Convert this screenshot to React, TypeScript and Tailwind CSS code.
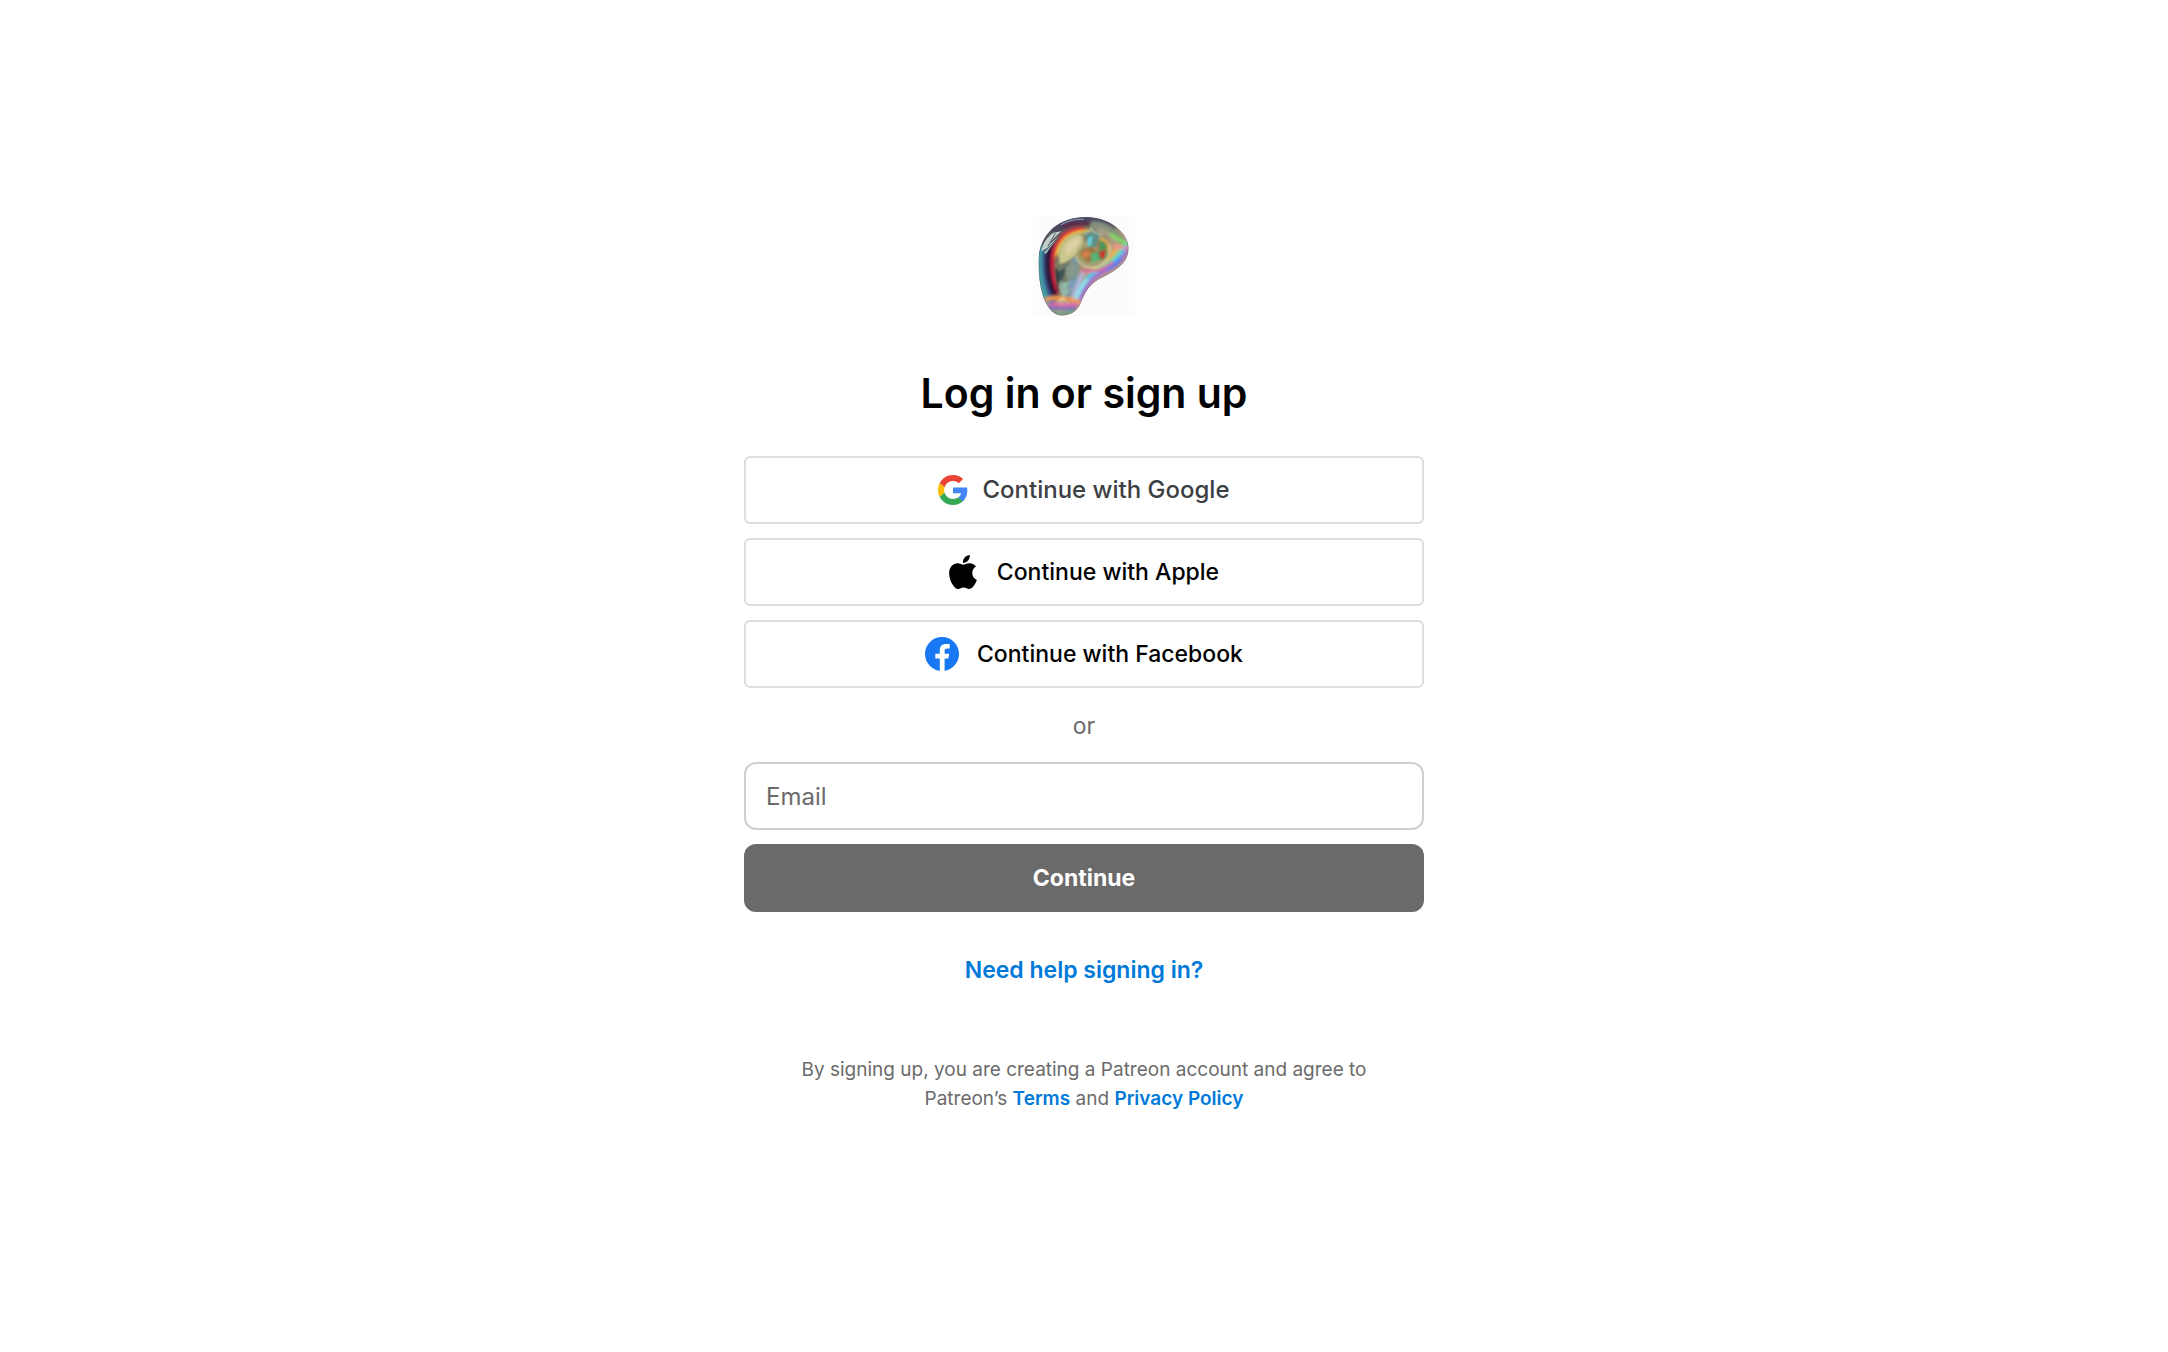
import { useState } from 'react'
import type { ReactNode } from 'react'

interface SocialButtonProps {
  icon: ReactNode
  label: string
  className?: string
}

const BLOB =
  'M187 39C252 39 314 84 314 133C314 176 276 200 240 218C196 238 184 262 170 298C160 324 136 335 114 335C86 335 66 306 56 274C46 240 43 204 44 165C47 88 104 39 187 39Z'

function PatreonLogo() {
  return (
    <svg viewBox="27 33 306 306" className="h-[102px] w-[102px]" role="img" aria-label="Patreon">
      <defs>
        <clipPath id="blob">
          <path d={BLOB} />
        </clipPath>
        <linearGradient id="base" x1="0" y1="0" x2="1" y2="1">
          <stop offset="0" stopColor="#3f3a5c" />
          <stop offset="0.35" stopColor="#7d7a5c" />
          <stop offset="0.6" stopColor="#c9a07c" />
          <stop offset="1" stopColor="#8a6fa8" />
        </linearGradient>
        <filter id="soft3" x="-30%" y="-30%" width="160%" height="160%">
          <feGaussianBlur stdDeviation="2.5" />
        </filter>
        <filter id="soft6" x="-30%" y="-30%" width="160%" height="160%">
          <feGaussianBlur stdDeviation="4" />
        </filter>
      </defs>
      <rect x="27" y="36" width="306" height="300" fill="#fcfcfc" />
      <g clipPath="url(#blob)" fill="none" strokeLinecap="round" strokeLinejoin="round">
        <path d={BLOB} fill="url(#base)" />
        <g filter="url(#soft6)">
          {/* outer rim */}
          <path d="M96 78C140 42 220 40 264 68" stroke="#4b4660" strokeWidth="26" />
          <path d="M120 68C150 56 176 56 204 62" stroke="#5b2547" strokeWidth="12" />
          <path d="M210 64C240 66 270 84 290 108" stroke="#84907c" strokeWidth="24" />
          <path d="M226 78C252 84 268 100 276 118" stroke="#a8a08a" strokeWidth="12" />
          <path d="M50 130C42 200 52 262 80 306" stroke="#3fa0a6" strokeWidth="16" />
          <path d="M62 140C56 200 64 248 84 290" stroke="#3b5590" strokeWidth="12" />
          <path d="M80 112C64 180 72 234 96 280" stroke="#2b1238" strokeWidth="19" />
          {/* warm band running down the left side */}
          <path d="M176 74C118 74 90 116 86 166C84 204 90 234 102 262" stroke="#e0133a" strokeWidth="9" />
          <path d="M190 78C132 76 100 112 94 160" stroke="#ff8a1c" strokeWidth="5" />
          <path d="M196 84C140 82 110 110 101 150" stroke="#f4dc5a" strokeWidth="7" />
          <path d="M130 140C112 190 112 230 124 280" stroke="#6f7a68" strokeWidth="32" />
          <path d="M152 170C156 210 146 250 130 270" stroke="#7294a0" strokeWidth="22" />
          {/* lower right rainbow edge */}
          <path d="M312 98C318 140 292 172 250 196C200 220 186 244 168 286" stroke="#a070cc" strokeWidth="15" />
          <path d="M306 122C290 160 252 180 222 198C194 214 176 236 164 266" stroke="#48c8e8" strokeWidth="12" />
          <path d="M294 124C280 162 244 180 212 194" stroke="#8fd880" strokeWidth="8" />
          <path d="M280 124C268 156 238 174 208 188" stroke="#f2ac4c" strokeWidth="10" />
          <path d="M264 176C236 200 206 204 176 200" stroke="#e6609c" strokeWidth="8" />
          <path d="M288 166C276 184 262 190 252 194" stroke="#4d7bf0" strokeWidth="10" />
          <path d="M262 92C284 104 294 114 312 118" stroke="#7fe05c" strokeWidth="10" />
          <path d="M276 130L312 132" stroke="#f4809c" strokeWidth="8" />
          <path d="M176 210C160 236 154 258 148 280" stroke="#b0b4d8" strokeWidth="14" />
          <path d="M188 228C172 246 166 260 158 280" stroke="#8ce4f0" strokeWidth="12" />
          {/* foot */}
          <path d="M68 286C96 276 126 284 164 292" stroke="#f29a4a" strokeWidth="12" />
          <path d="M74 302C98 298 130 304 158 302" stroke="#dc60b8" strokeWidth="9" />
          <path d="M78 312C98 312 130 316 152 312" stroke="#6a5fd0" strokeWidth="7" />
          <path d="M86 324C104 330 128 330 146 320" stroke="#5c9f86" strokeWidth="9" />
        </g>
        <g filter="url(#soft3)">
          {/* pale highlight */}
          <path d="M106 166C98 132 124 98 158 90C180 88 184 106 172 128C158 152 138 176 106 180Z" fill="#c9c68e" />
          <path d="M124 134C136 108 154 98 168 102C164 124 148 144 126 152Z" fill="#ddd0a4" />
          <path d="M156 150C172 110 214 84 244 100C266 118 260 164 232 184C208 196 170 188 156 150Z" fill="#a3a070" />
          <path d="M180 84L226 84L222 128L196 130Z" fill="#5f8c84" />
          <path d="M192 100L206 96L202 124L190 128Z" fill="#5fd0d8" />
          <path d="M166 150C176 128 196 124 214 134L220 158L190 178Z" fill="#9c7845" />
          <path d="M172 150L190 138L200 152L182 164Z" fill="#d88048" />
          <path d="M200 150L222 142L228 166L204 178Z" fill="#56b474" />
          <path d="M224 108C242 106 256 122 254 146C250 162 238 172 226 168C216 146 216 124 224 108Z" fill="#4c965c" />
          <path d="M230 106C248 110 256 124 252 146" stroke="#f0a43e" strokeWidth="5" />
          <path d="M226 144L246 136L240 166L228 160Z" fill="#cc3028" />
          <path d="M224 116L220 142" stroke="#d8643a" strokeWidth="4" />
          <path d="M258 122C262 150 244 182 214 190C186 194 164 182 154 156" stroke="#d8d4b2" strokeOpacity="0.8" strokeWidth="5" />
          <path d="M180 92L196 80L202 72L208 84L236 92" stroke="#d4dccd" strokeOpacity="0.7" strokeWidth="4" />
          <path d="M98 204L124 192L116 226L98 234Z" fill="#3b5252" />
          <path d="M126 192L146 172L162 196L150 218L128 224Z" fill="#86988a" />
          <path d="M108 236L136 232L130 268L116 276Z" fill="#8fb7a6" />
          <path d="M136 228L154 236L140 256Z" fill="#7f9fc9" />
          <path d="M104 240L118 280L142 254" stroke="#d8e2cf" strokeOpacity="0.7" strokeWidth="3" />
          <path d="M97 196L103 260" stroke="#1c1c2a" strokeWidth="5" />
          <path d="M118 282L112 302M118 284L130 298M114 284L100 294" stroke="#fff1b0" strokeOpacity="0.7" strokeWidth="4" />
        </g>
        {/* window reflections */}
        <path d="M52 142C56 118 70 98 88 86L112 82C96 94 76 118 70 132Z" fill="#c3d0cb" />
        <path d="M60 146L78 118L104 98L94 112L78 132L66 150Z" fill="#a3bdb6" />
        <path d="M72 126L94 88M64 140L106 98" stroke="#4c6470" strokeWidth="3" />
        <path d="M112 62C136 48 156 46 178 46" stroke="#8e9fbd" strokeWidth="3" />
        <path d={BLOB} stroke="#596078" strokeOpacity="0.45" strokeWidth="4" />
      </g>
    </svg>
  )
}

function GoogleIcon() {
  return (
    <svg viewBox="0 0 48 48" className="h-[30px] w-[30px]" aria-hidden="true">
      <path fill="#EA4335" d="M24 9.5c3.54 0 6.71 1.22 9.21 3.6l6.85-6.85C35.9 2.38 30.47 0 24 0 14.62 0 6.51 5.38 2.56 13.22l7.98 6.19C12.43 13.72 17.74 9.5 24 9.5z" />
      <path fill="#4285F4" d="M46.98 24.55c0-1.57-.15-3.09-.38-4.55H24v9.02h12.94c-.58 2.96-2.26 5.48-4.78 7.18l7.73 6c4.51-4.18 7.09-10.36 7.09-17.65z" />
      <path fill="#FBBC05" d="M10.53 28.59c-.48-1.45-.76-2.99-.76-4.59s.27-3.14.76-4.59l-7.98-6.19C.92 16.46 0 20.12 0 24c0 3.88.92 7.54 2.56 10.78l7.97-6.19z" />
      <path fill="#34A853" d="M24 48c6.48 0 11.93-2.13 15.89-5.81l-7.73-6c-2.15 1.45-4.92 2.3-8.16 2.3-6.26 0-11.57-4.22-13.47-9.91l-7.98 6.19C6.51 42.62 14.62 48 24 48z" />
    </svg>
  )
}

function AppleIcon() {
  return (
    <svg viewBox="0 0 814 1000" className="h-[34px] w-7" aria-hidden="true">
      <path d="M788.1 340.9c-5.8 4.5-108.2 62.2-108.2 190.5 0 148.4 130.3 200.9 134.2 202.2-.6 3.2-20.7 71.9-68.7 141.9-42.8 61.6-87.5 123.1-155.5 123.1s-85.5-39.5-164-39.5c-76.5 0-103.7 40.8-165.9 40.8s-105.6-57-155.5-127C46.7 790.7 0 663 0 541.8c0-194.4 126.4-297.5 250.8-297.5 66.1 0 121.2 43.4 162.7 43.4 39.5 0 101.1-46 176.3-46 28.5 0 130.9 2.6 198.3 99.2zm-234-181.5c31.1-36.9 53.1-88.1 53.1-139.3 0-7.1-.6-14.3-1.9-20.1-50.6 1.9-110.8 33.7-147.1 75.8-28.5 32.4-55.1 83.6-55.1 135.5 0 7.8 1.3 15.6 1.9 18.1 3.2.6 8.4 1.3 13.6 1.3 45.4 0 102.5-30.4 135.5-71.3z" />
    </svg>
  )
}

function FacebookIcon() {
  return (
    <svg viewBox="0 0 34 34" className="h-[34px] w-[34px]" aria-hidden="true">
      <circle cx="17" cy="17" r="17" fill="#1877F2" />
      <path fill="#fff" d="M14.8 34V21.6H10.3v-4.9h4.5v-3.9c0-3.7 2.3-5.9 6-5.9h3.9v4.5h-2.5c-1.9 0-2.6 1-2.6 2.4v2.9h4.6l-.8 4.9h-3.8V34z" />
    </svg>
  )
}

function SocialButton({ icon, label, className = 'gap-[18px] text-[23px] text-black' }: SocialButtonProps) {
  return (
    <button
      type="button"
      className={`flex h-[68px] w-full items-center justify-center rounded-md border-2 border-[#dfdfe3] bg-white font-medium ${className}`}
    >
      {icon}
      <span>{label}</span>
    </button>
  )
}

export default function App() {
  const [email, setEmail] = useState('')

  return (
    <main className="flex min-h-screen flex-col items-center justify-center bg-white px-4 pb-6 font-['Inter',sans-serif]">
      <PatreonLogo />
      <h1 className="mt-12 text-[41px] leading-[56px] font-semibold text-black">Log in or sign up</h1>

      <div className="mt-[35px] flex w-full max-w-[680px] flex-col gap-3.5">
        <SocialButton icon={<GoogleIcon />} label="Continue with Google" className="gap-3.5 text-2xl text-[#3c4043]" />
        <SocialButton icon={<AppleIcon />} label="Continue with Apple" className="gap-5 text-[23px] text-black" />
        <SocialButton icon={<FacebookIcon />} label="Continue with Facebook" />
      </div>

      <p className="mt-5 mb-[18px] text-[23px] leading-9 text-[#6b6b6b]">or</p>

      <form className="flex w-full max-w-[680px] flex-col gap-3.5" onSubmit={(e) => e.preventDefault()}>
        <input
          type="email"
          aria-label="Email"
          placeholder="Email"
          value={email}
          onChange={(e) => setEmail(e.target.value)}
          className="h-[68px] w-full rounded-xl border-2 border-[#cfcfcf] px-5 text-2xl text-black placeholder:text-[#6b6b6b]"
        />
        <button type="submit" className="h-[68px] w-full rounded-xl bg-[#6a6a6a] text-[23px] font-bold text-white">
          Continue
        </button>
      </form>

      <a href="#help" className="mt-10 text-[23px] leading-9 font-semibold text-[#007ad9]">
        Need help signing in?
      </a>

      <p className="mt-[67px] text-center text-[19px] leading-[29px] text-[#6b6b6b]">
        By signing up, you are creating a Patreon account and agree to
        <br />
        Patreon’s{' '}
        <a href="#terms" className="font-semibold text-[#007ad9]">Terms</a> and{' '}
        <a href="#privacy" className="font-semibold text-[#007ad9]">Privacy Policy</a>
      </p>
    </main>
  )
}
